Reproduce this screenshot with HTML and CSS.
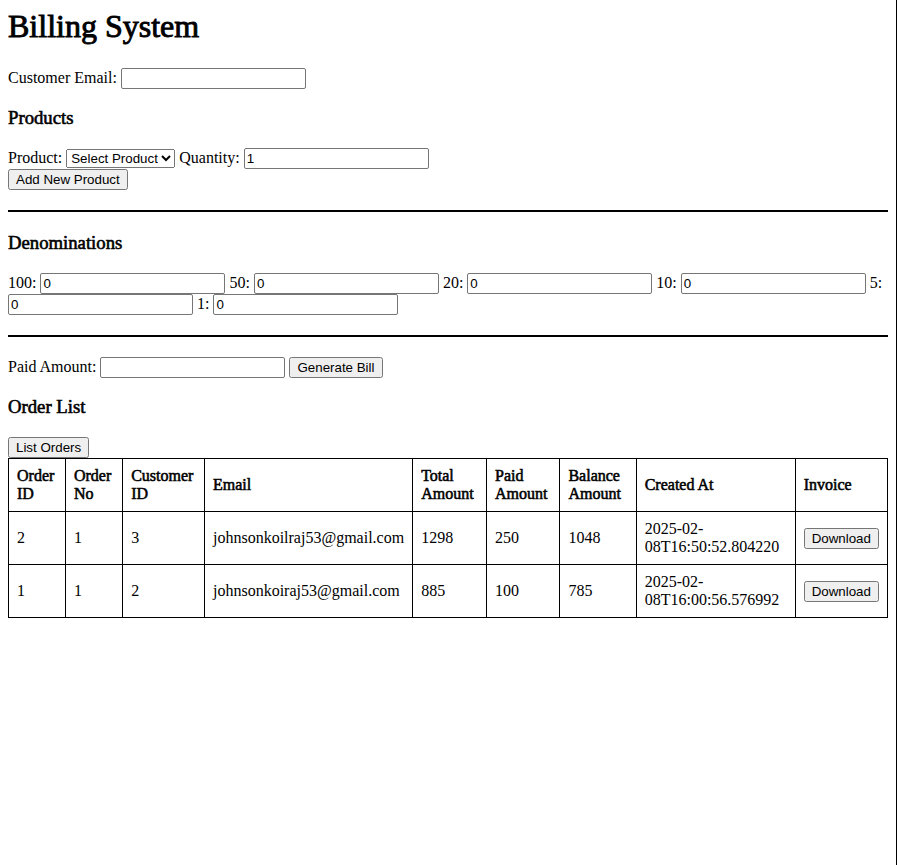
FILE: index.html
```html
<!DOCTYPE html>
<html lang="en">
<head>
<meta charset="utf-8">
<title>Billing System</title>
<link rel="stylesheet" href="styles.css">
</head>
<body>
<div class="app">
  <h1 class="title">Billing System</h1>
  <div class="row">
    <label>Customer Email: </label><input type="email" class="field">
  </div>
  <h3 class="heading">Products</h3>
  <div class="row">
    <label>Product: </label><select class="select"><option>Select Product</option></select>
    <label> Quantity: </label><input type="number" class="field" value="1">
  </div>
  <button class="btn">Add New Product</button>
  <hr class="rule">
  <h3 class="heading">Denominations</h3>
  <div class="row">
    <label>100: </label><input type="number" class="field" value="0">
    <label> 50: </label><input type="number" class="field" value="0">
    <label> 20: </label><input type="number" class="field" value="0">
    <label> 10: </label><input type="number" class="field" value="0">
    <label> 5: </label><input type="number" class="field" value="0">
    <label> 1: </label><input type="number" class="field" value="0">
  </div>
  <hr class="rule">
  <div class="row">
    <label>Paid Amount: </label><input type="number" class="field">
    <button class="btn">Generate Bill</button>
  </div>
  <h3 class="heading">Order List</h3>
  <button class="btn">List Orders</button>
  <table class="orders">
    <thead>
      <tr>
        <th>Order ID</th>
        <th>Order No</th>
        <th>Customer ID</th>
        <th>Email</th>
        <th>Total Amount</th>
        <th>Paid Amount</th>
        <th>Balance Amount</th>
        <th>Created At</th>
        <th>Invoice</th>
      </tr>
    </thead>
    <tbody>
      <tr>
        <td>2</td>
        <td>1</td>
        <td>3</td>
        <td>johnsonkoilraj53@gmail.com</td>
        <td>1298</td>
        <td>250</td>
        <td>1048</td>
        <td>2025-02-08T16:50:52.804220</td>
        <td><button class="btn">Download</button></td>
      </tr>
      <tr>
        <td>1</td>
        <td>1</td>
        <td>2</td>
        <td>johnsonkoiraj53@gmail.com</td>
        <td>885</td>
        <td>100</td>
        <td>785</td>
        <td>2025-02-08T16:00:56.576992</td>
        <td><button class="btn">Download</button></td>
      </tr>
    </tbody>
  </table>
</div>
</body>
</html>
```

FILE: styles.css
```css
html {
  width: 896px;
  min-height: 100%;
  border-right: 1px solid #000;
  background: #fff;
}
body {
  margin: 8px;
  font-family: "Liberation Serif", "Times New Roman", serif;
  font-size: 16px;
  color: #000;
}
.app {
  display: flow-root;
}
.title {
  margin: 0 0 22.6px;
  font-size: 32px;
  font-weight: normal;
  -webkit-text-stroke: 0.9px #000;
}
.heading {
  font-size: 18.72px;
  margin: 18.72px 0;
  font-weight: normal;
  -webkit-text-stroke: 0.6px #000;
}
.field {
  font-family: "Liberation Sans", Arial, sans-serif;
  font-size: 13.33px;
  width: 185px;
  box-sizing: border-box;
  height: 21px;
  padding: 1px 2px;
  border: 1px solid #767676;
  border-radius: 2px;
}
.select {
  font-family: "Liberation Sans", Arial, sans-serif;
  font-size: 13.33px;
}
.btn {
  font-family: "Liberation Sans", Arial, sans-serif;
  font-size: 13.33px;
}
.rule {
  margin: 20px 0;
  border: 0;
  border-top: 2px solid #000;
}
.orders {
  width: 100%;
  border-collapse: collapse;
}
.orders th,
.orders td {
  border: 1px solid #000;
  padding: 8px;
  text-align: left;
}
.orders th {
  font-weight: normal;
  -webkit-text-stroke: 0.55px #000;
}
```
